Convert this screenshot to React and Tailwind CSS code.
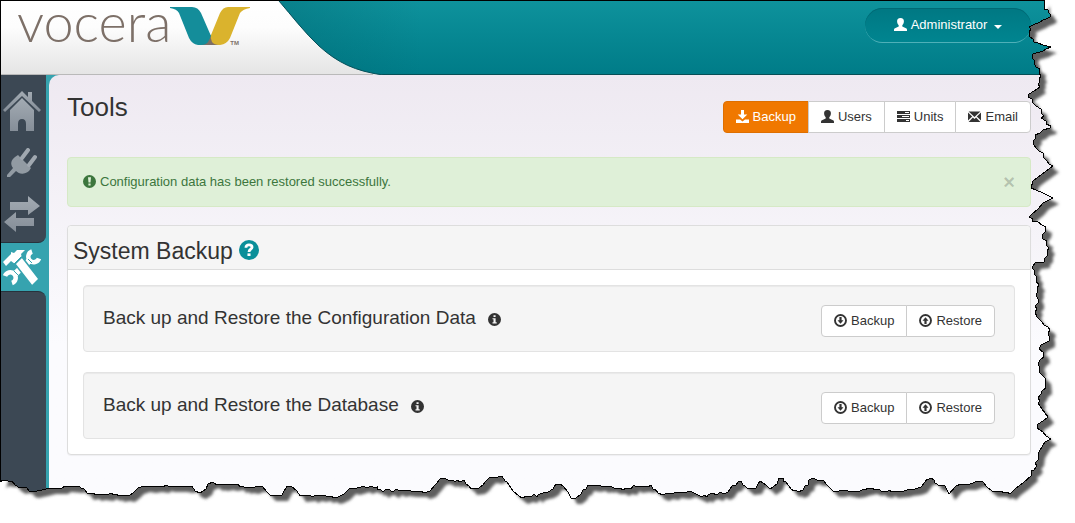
import { useState } from 'react';
import clsx from 'clsx';

// outline of the torn paper edge, from the top right corner round to the bottom left
const TEAR =
  '1044,0 1044,9 1048,10 1048,12 1051,15 1050,17 1046,19 1043,20 1040,22 1033,25 1029,27 1031,29 1029,32 1030,37 1033,39 1034,42 1038,43 1043,45 1051,47 1046,49 1043,51 1033,54 1032,58 1034,60 1034,63 1036,67 1040,69 1039,73 1041,76 1039,79 1040,82 1038,84 1040,87 1034,91 1029,94 1028,97 1032,99 1033,103 1036,106 1041,109 1041,113 1044,116 1041,118 1046,121 1046,124 1051,126 1050,128 1043,130 1040,133 1035,135 1036,138 1033,141 1034,145 1036,148 1039,151 1043,153 1043,157 1047,161 1049,164 1053,166 1049,169 1045,172 1038,177 1033,181 1031,188 1036,190 1043,193 1053,198 1047,201 1043,203 1038,209 1032,214 1029,217 1033,219 1032,221 1038,222 1042,225 1046,227 1045,232 1042,235 1043,239 1047,241 1046,245 1049,248 1047,251 1047,256 1044,259 1044,262 1035,263 1032,268 1035,271 1034,274 1037,277 1036,281 1039,285 1037,288 1038,291 1036,295 1038,299 1038,303 1035,306 1037,309 1035,312 1037,317 1042,322 1044,325 1048,327 1050,330 1048,333 1049,336 1049,341 1041,345 1039,349 1043,352 1044,357 1040,360 1038,364 1040,368 1039,372 1045,378 1046,388 1042,391 1041,394 1038,398 1040,401 1038,403 1042,409 1048,417 1043,421 1038,424 1037,428 1043,432 1046,436 1051,439 1045,442 1042,447 1039,452 1038,460 1035,463 1037,466 1034,470 1031,471 1032,475 1023,483 1015,489 1010,494 1007,492 1004,493 1001,491 992,491 987,487 983,482 978,481 970,484 961,484 956,486 949,494 945,486 942,485 940,486 935,483 934,480 931,478 929,479 927,479 925,482 921,487 915,489 907,490 904,491 892,492 889,490 887,492 881,491 879,489 876,490 871,488 862,490 860,491 853,492 848,491 843,490 839,491 833,491 827,485 823,480 817,480 813,478 809,480 808,485 805,486 803,490 798,492 796,490 794,491 791,489 786,482 783,481 783,478 779,478 777,484 770,489 766,485 760,481 758,484 756,488 748,489 745,486 743,485 741,481 738,482 736,485 732,486 728,492 724,494 720,492 717,495 712,493 708,495 707,497 704,495 702,497 696,494 690,491 684,493 675,492 673,494 667,493 663,495 658,493 655,489 653,489 651,485 648,487 644,486 636,487 634,485 631,489 626,488 623,490 620,488 614,488 610,486 608,487 606,486 603,487 599,485 595,486 588,485 586,489 583,490 581,494 576,498 571,498 568,492 563,486 560,484 556,484 553,489 548,492 543,493 540,494 538,495 537,497 534,494 531,497 527,496 522,498 519,496 513,491 507,482 505,481 502,476 499,476 497,478 490,477 486,481 483,485 479,488 471,489 469,486 466,484 464,480 460,482 457,480 455,482 453,480 450,481 444,478 440,479 436,484 430,491 424,493 421,491 411,491 403,490 400,491 396,489 393,492 388,489 385,490 383,492 380,489 377,490 377,487 374,488 372,486 366,488 364,486 354,489 350,488 344,494 338,497 334,498 331,496 327,497 325,495 320,496 316,495 312,497 310,495 300,496 297,491 291,486 287,486 282,495 270,495 267,492 262,486 257,486 253,488 247,487 245,488 243,486 240,487 238,484 231,485 228,484 221,485 219,484 217,485 213,482 208,484 206,489 200,493 195,491 192,486 187,487 181,486 168,486 166,485 163,487 156,486 150,487 144,486 138,488 134,492 129,496 124,495 118,496 117,494 115,495 110,493 108,495 99,494 96,495 93,493 88,494 84,489 81,488 79,486 77,487 65,486 62,488 50,488 42,490 37,491 33,492 29,491 27,488 23,487 20,488 15,485 12,481 8,481 3,480 0,482';

function TornEdge() {
  return (
    <svg
      className="absolute inset-0 w-full h-full pointer-events-none"
      viewBox="0 0 1075 523"
      preserveAspectRatio="none"
      aria-hidden="true"
    >
      <defs>
        <clipPath id="outside">
          <polygon points={`${TEAR} 0,523 1075,523 1075,0`} />
        </clipPath>
        <filter id="soft" x="-5%" y="-5%" width="110%" height="110%">
          <feGaussianBlur stdDeviation="1.5" />
        </filter>
      </defs>
      <g clipPath="url(#outside)">
        <rect width="1075" height="523" fill="#fff" />
        <polygon
          points={`${TEAR} 4,470 4,8 1040,8`}
          transform="translate(6 6)"
          fill="#5f5f5f"
          filter="url(#soft)"
        />
      </g>
      <polyline points={TEAR} fill="none" stroke="#000" shapeRendering="crispEdges" />
    </svg>
  );
}

const glyphs = {
  user: (
    <path d="M6.500 0C8.900 0 10 1.400 9.900 3.500 9.800 5.300 9.100 6.400 8.300 7.200V8.600L12 10.300C12.700 10.600 13 11 13 11.700V13H0V11.700C0 11 .3 10.600 1 10.300L4.700 8.600V7.200C3.900 6.400 3.200 5.300 3.100 3.500 3 1.400 4.100 0 6.500 0Z" />
  ),
  save: (
    <path d="M5 0H8V4.500H11.300L6.500 9.300 1.700 4.500H5ZM0 9.500H4L6.500 11.500 9 9.500H13V13H0Z" />
  ),
  tasks: (
    <path
      fillRule="evenodd"
      d="M0 1H13V4H0ZM8 2V3H12V2ZM0 5H13V8H0ZM5 6V7H12V6ZM0 9H13V12H0ZM9 10V11H12V10Z"
    />
  ),
  envelope: (
    <path d="M.6 1.500H12.400L6.500 7ZM0 2.500 4.200 6.500 0 10.500ZM13 2.500V10.500L8.800 6.500ZM.6 12 4.900 7.400 6.500 8.900 8.100 7.400 12.400 12Z" />
  ),
  download: (
    <>
      <circle cx="6.500" cy="6.500" r="5.500" fill="none" stroke="currentColor" strokeWidth="1.900" />
      <path d="M5.400 3H7.600V6.300H9.500L6.500 9.800 3.500 6.300H5.400Z" />
    </>
  ),
  upload: (
    <>
      <circle cx="6.500" cy="6.500" r="5.500" fill="none" stroke="currentColor" strokeWidth="1.900" />
      <path d="M5.400 10H7.600V6.700H9.500L6.500 3.200 3.500 6.700H5.400Z" />
    </>
  ),
  alert: (
    <path
      fillRule="evenodd"
      d="M6.500 0A6.500 6.500 0 1 1 6.500 13 6.500 6.500 0 0 1 6.500 0ZM5 2.300 5.500 7.500H7.500L8 2.300ZM5.400 8.600V10.600H7.600V8.600Z"
    />
  ),
  info: (
    <path
      fillRule="evenodd"
      d="M6.500 0A6.500 6.500 0 1 1 6.500 13 6.500 6.500 0 0 1 6.500 0ZM5.500 2.300V4.100H7.600V2.300ZM4.500 5.200V6.300H5.500V9.300H4.500V10.500H8.700V9.300H7.600V5.200Z"
    />
  ),
  question: (
    <>
      <circle cx="6.500" cy="6.500" r="6.500" />
      <path d="M4.500 5C4.500 3.700 5.300 3.200 6.500 3.200 7.800 3.200 8.500 3.800 8.500 4.700 8.500 6 6.500 5.900 6.500 7.800" fill="none" stroke="#fff" strokeWidth="1.800" />
      <path d="M5.500 8.700H7.500V10.400H5.500Z" fill="#fff" />
    </>
  ),
};

function Glyph({ name, className = 'size-[13px] mb-[2px]' }) {
  return (
    <svg className={clsx('shrink-0', className)} viewBox="0 0 13 13" fill="currentColor" aria-hidden="true">
      {glyphs[name]}
    </svg>
  );
}

function Logo() {
  return (
    <a href="#home" className="relative flex items-start pl-[16px] text-[#7d7068]" aria-label="vocera">
      <span className="w-[153px] font-['Lato',sans-serif] font-light text-[54px] leading-[42px]">vocera</span>
      <svg className="w-[80px] h-[40px] mt-[5px]" viewBox="0 0 80 40" aria-hidden="true">
        <path d="M28 38 38 27 50 38Q48 39 46 39H32Q30 39 28 38Z" fill="#7d6e66" />
        <path d="M0 1H22Q28 1 31 7L41 30 38 36Q36 39 31 39H28Q22 38 19 32L9 7Q7 3 0 2Z" fill="#148d9a" />
        <path d="M80 1H58Q53 1 50 7L41 29Q40 32 42 36 44 39 50 39 57 38 60 32L70 7Q73 3 80 2Z" fill="#dab32d" />
      </svg>
      <span className="absolute right-[11px] top-[38px] text-[6px] leading-[8px] font-bold">TM</span>
    </a>
  );
}

function Header() {
  return (
    <header className="relative flex h-[74px] items-start justify-between border-b border-[#064e55] bg-linear-to-b from-[#0e929c] to-[#007c88] pr-[44px]">
      <svg className="absolute left-0 top-0 h-[74px] w-[420px]" viewBox="0 0 420 74" aria-hidden="true">
        <defs>
          <linearGradient id="silver" x1="0" y1="0" x2="0" y2="1">
            <stop offset="0" stopColor="#fff" />
            <stop offset=".35" stopColor="#fdfdfd" />
            <stop offset="1" stopColor="#e4e4e4" />
          </linearGradient>
          <linearGradient id="shade" x1="0" y1="0" x2="1" y2="0">
            <stop offset="0" stopColor="#005f6a" stopOpacity=".45" />
            <stop offset="1" stopColor="#005f6a" stopOpacity="0" />
          </linearGradient>
        </defs>
        <rect x="230" width="190" height="74" fill="url(#shade)" />
        <path d="M0 0H278C291 15 303 31 318 45 337 62 354 70 382 74H0Z" fill="url(#silver)" />
        <path d="M278 0C291 15 303 31 318 45 337 62 354 70 382 74" fill="none" stroke="#06505a" />
        <path d="M0 73.500H372" stroke="#b9b9b9" />
      </svg>
      <Logo />
      <button
        type="button"
        className="relative mt-[7px] flex h-[35px] w-[166px] items-center justify-center gap-1 rounded-full border-b border-[#4fb0b8] bg-linear-to-b from-[#007883] to-[#008590] text-[13px] text-white shadow-[inset_0_1px_0_#006a75]"
      >
        <Glyph name="user" />
        Administrator
        <span className="ml-[3px] mt-1 border-x-4 border-t-4 border-x-transparent border-t-white" />
      </button>
    </header>
  );
}

const navLink = 'flex items-center justify-center';

function Sidebar() {
  return (
    <nav className="flex w-[48px] shrink-0 flex-col bg-[#36a3af]">
      <svg className="absolute size-0" aria-hidden="true">
        <linearGradient id="metal" x1="0" y1="0" x2="0" y2="1">
          <stop offset="0" stopColor="#a3abb3" />
          <stop offset="1" stopColor="#858e98" />
        </linearGradient>
      </svg>
      <div className="mr-[3px] flex flex-col rounded-br-lg border-b border-[#27323c] bg-[#3c4854] pt-[10px] pr-[3px] pb-[3px]">
        <a href="#home" aria-label="Home" className={`${navLink} h-[52px]`}>
          <svg className="h-[40px] w-[38px]" viewBox="0 0 38 40" fill="url(#metal)">
            <path d="M19 0 25 6V1H29V10L38 19 36 21 19 5 2 21 0 19Z" />
            <path d="M19 7 31 19V40H23V33Q23 28 19 28 15 28 15 33V40H7V19Z" />
          </svg>
        </a>
        <a href="#connections" aria-label="Connections" className={`${navLink} h-[52px]`}>
          <svg className="h-[30px] w-[30px]" viewBox="0 0 30 30">
            <path d="M8 9 11 7 24 20 22 23C17 27 12 26 9 23L3 29 0 29 0 27 6 20C3 16 4 12 8 9Z" fill="#929ba3" />
            <path d="M15 10 21 2M22 17 28 9" stroke="#a0a8b0" strokeWidth="4" strokeLinecap="round" />
          </svg>
        </a>
        <a href="#transfer" aria-label="Transfer" className={`${navLink} h-[50px]`}>
          <svg className="h-[36px] w-[36px]" viewBox="0 0 36 36" fill="url(#metal)">
            <path d="M6 6H24V0L36 10 24 19V14H6ZM30 22V30H12V36L0 26 12 16V22Z" />
          </svg>
        </a>
      </div>
      <a href="#tools" aria-label="Tools" className={`${navLink} h-[48px] mr-[5px]`}>
        <svg className="h-[37px] w-[39px]" viewBox="0 0 39 37" fill="#fff">
          <path d="M0 13 8 5 8 3 11 4 14 1 22 1 18 5 19 9 12 15 8 12 3 17Z" />
          <path d="M12 25 27 11" stroke="#fff" strokeWidth="6" />
          <path d="M29 2.500A5.500 5.500 0 1 0 36 9.500" fill="none" stroke="#fff" strokeWidth="4.500" />
          <path d="M2 27A5.500 5.500 0 1 1 9 34" fill="none" stroke="#fff" strokeWidth="4.500" />
          <path d="M12 15 19 8 36 30 29 37Z" stroke="#36a3af" strokeWidth="1.500" />
          <path d="M11 22 15 26M25 10 29 14M11 15 18 8" fill="none" stroke="#36a3af" />
        </svg>
      </a>
      <div className="mr-[3px] flex-1 rounded-tr-lg border-t border-[#27323c] bg-[#3c4854]" />
    </nav>
  );
}

const btn =
  'flex h-[32px] items-center gap-1 border border-[#ccc] px-3 -ml-px first:ml-0 first:rounded-l last:rounded-r';

const tabs = [
  { label: 'Backup', icon: 'save' },
  { label: 'Users', icon: 'user' },
  { label: 'Units', icon: 'tasks' },
  { label: 'Email', icon: 'envelope' },
];

function BackupRow({ title }) {
  return (
    <div className="flex h-[67px] items-start justify-between rounded border border-[#e3e3e3] bg-[#f5f5f5] p-[19px] shadow-[inset_0_1px_1px_rgba(0,0,0,0.05)]">
      <h3 className="flex items-center gap-3 text-[19px] leading-[26px]">
        {title}
        <Glyph name="info" className="size-[13px] mt-[3px]" />
      </h3>
      <div className="flex">
        <button type="button" className={`${btn} bg-white`}>
          <Glyph name="download" />
          Backup
        </button>
        <button type="button" className={`${btn} bg-white`}>
          <Glyph name="upload" />
          Restore
        </button>
      </div>
    </div>
  );
}

export default function App() {
  const [active, setActive] = useState('Backup');
  const [showAlert, setShowAlert] = useState(true);

  return (
    <div className="relative flex min-h-screen flex-col bg-white font-['Liberation_Sans',Arial,sans-serif] text-[13px] leading-[18px] text-[#333]">
      <div className="flex flex-1 flex-col border-l border-t border-black">
        <Header />
        <div className="flex flex-1 bg-[#36a3af]">
          <Sidebar />
          <main className="flex-1 rounded-tl-[10px] bg-linear-to-b from-[#eee9f1] to-[#fbfbfe] to-60% pl-[18px] pr-[44px]">
            <div className="flex items-start justify-between pt-[16px]">
              <h1 className="text-[26px] leading-[32px]">Tools</h1>
              <div className="mt-[10px] flex">
                {tabs.map((tab) => (
                  <button
                    key={tab.label}
                    type="button"
                    onClick={() => setActive(tab.label)}
                    className={clsx(btn, active === tab.label ? 'border-[#de6f00] bg-[#f07800] text-white' : 'bg-white')}
                  >
                    <Glyph name={tab.icon} />
                    {tab.label}
                  </button>
                ))}
              </div>
            </div>

            {showAlert && (
              <div role="alert" className="mt-6 flex h-[50px] items-center gap-1 rounded border border-[#d6e9c6] bg-[#dff0d8] px-[15px] text-[#3c763d]">
                <Glyph name="alert" />
                <span className="flex-1">Configuration data has been restored successfully.</span>
                <button
                  type="button"
                  aria-label="Close"
                  onClick={() => setShowAlert(false)}
                  className="text-[20px] leading-[20px] font-bold text-black/20"
                >
                  ×
                </button>
              </div>
            )}

            <section className="mt-[18px] rounded border border-[#ddd] bg-white shadow-[0_1px_1px_rgba(0,0,0,0.05)]">
              <div className="flex h-[44px] items-center gap-[6px] rounded-t border-b border-[#ddd] bg-[#f5f5f5] px-[5px] pt-[6px]">
                <h2 className="text-[23px] leading-[26px]">System Backup</h2>
                <Glyph name="question" className="size-[20px] text-[#0a8f99] -mt-[2px]" />
              </div>
              <div className="flex flex-col gap-5 p-[15px]">
                <BackupRow title="Back up and Restore the Configuration Data" />
                <BackupRow title="Back up and Restore the Database" />
              </div>
            </section>
          </main>
        </div>
      </div>
      <TornEdge />
    </div>
  );
}
